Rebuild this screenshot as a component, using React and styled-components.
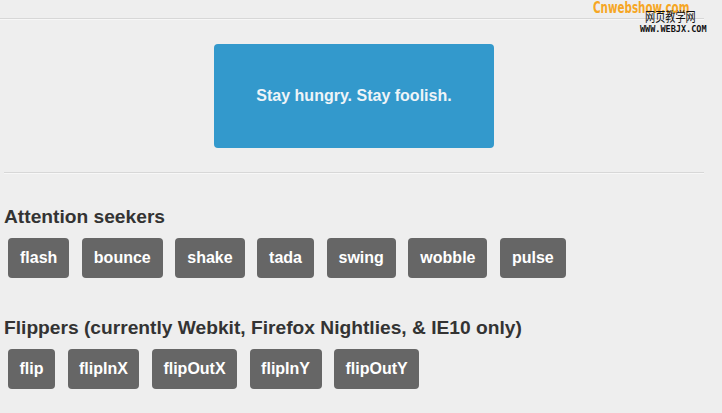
import React from "react";
import styled, { createGlobalStyle } from "styled-components";

const Global = createGlobalStyle`
  html, body { margin: 0; padding: 0; background: #eeeeee; }
  body { font-family: "Liberation Sans", Arial, sans-serif; color: #333; }
`;

const Page = styled.div`
  position: relative;
  display: flex;
  flex-direction: column;
  align-items: flex-start;
  width: 700px;
  padding: 0 0 0 4px;
  min-height: 413px;
`;

const Rule = styled.hr`
  align-self: stretch;
  margin: ${(p) => p.$mt}px 0 0 ${(p) => (p.$full ? -4 : 0)}px;
  height: 0;
  border: 0;
  border-top: 1px solid #d7d7d7;
  border-bottom: 1px solid #f7f7f7;
`;

const Hero = styled.div`
  align-self: center;
  margin-top: 24px;
  width: 280px;
  height: 104px;
  background: #3399cc;
  border-radius: 4px;
  display: flex;
  align-items: center;
  justify-content: center;
  color: #eef4f8;
  font-weight: bold;
  font-size: 16px;
`;

const Section = styled.section`
  display: flex;
  flex-direction: column;
  gap: 10px;
  margin-top: ${(p) => p.$mt}px;
`;

const Heading = styled.h2`
  margin: 0;
  font-size: 19.2px;
  line-height: 23px;
  font-weight: bold;
  color: #333;
`;

const Buttons = styled.div`
  display: flex;
  gap: 12.5px;
  padding-left: 4px;
`;

const Btn = styled.button`
  height: 40px;
  padding: 0 ${(p) => (p.$tight ? 11.5 : 12)}px;
  border: 0;
  border-radius: 4px;
  background: #666666;
  color: #ffffff;
  font-family: "Liberation Sans", Arial, sans-serif;
  font-weight: bold;
  font-size: 16px;
  line-height: 40px;
  cursor: pointer;
`;

const Watermark = styled.div`
  position: absolute;
  top: 0;
  left: 593px;
  width: 120px;
  height: 34px;
`;

const Brand = styled.div`
  position: absolute;
  top: 0;
  left: 0;
  font-family: "DejaVu Sans", sans-serif;
  font-weight: bold;
  font-size: 15px;
  line-height: 17px;
  color: #f6a623;
  transform: scaleX(0.69);
  transform-origin: left top;
  white-space: nowrap;
`;

const Cn = styled.div`
  position: absolute;
  top: 8px;
  left: 52px;
  font-family: "Noto Sans CJK SC", sans-serif;
  font-size: 13px;
  line-height: 15px;
  color: #111;
  transform: scaleX(0.78);
  transform-origin: left top;
  white-space: nowrap;
`;

const Url = styled.div`
  position: absolute;
  top: 24px;
  left: 47px;
  font-family: "DejaVu Sans Mono", monospace;
  font-weight: bold;
  font-size: 8.5px;
  line-height: 10px;
  color: #111;
`;

const attention = ["flash", "bounce", "shake", "tada", "swing", "wobble", "pulse"];
const flippers = ["flip", "flipInX", "flipOutX", "flipInY", "flipOutY"];

export default function App() {
  return (
    <>
      <Global />
      <Page>
        <Rule $mt={18} $full />
        <Hero>Stay hungry. Stay foolish.</Hero>
        <Rule $mt={24} />
        <Section $mt={31}>
          <Heading>Attention seekers</Heading>
          <Buttons>
            {attention.map((n) => (
              <Btn key={n}>{n}</Btn>
            ))}
          </Buttons>
        </Section>
        <Section $mt={38}>
          <Heading>Flippers (currently Webkit, Firefox Nightlies, &amp; IE10 only)</Heading>
          <Buttons>
            {flippers.map((n) => (
              <Btn key={n} $tight>{n}</Btn>
            ))}
          </Buttons>
        </Section>
        <Watermark>
          <Brand>Cnwebshow.com</Brand>
          <Cn>网页教学网</Cn>
          <Url>WWW.WEBJX.COM</Url>
        </Watermark>
      </Page>
    </>
  );
}
